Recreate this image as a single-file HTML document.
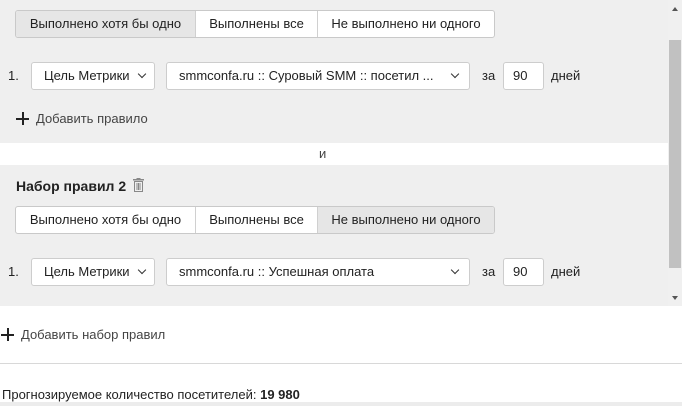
<!DOCTYPE html>
<html><head><meta charset="utf-8"><style>
*{box-sizing:border-box;margin:0;padding:0}
body{width:682px;height:406px;position:relative;overflow:hidden;background:#fff;font-family:"Liberation Sans",sans-serif;font-size:13px;color:#222}
.g{position:absolute;left:0;width:668px;background:#efefef}
.abs{position:absolute;white-space:nowrap}
.seg{position:absolute;height:28px;border:1px solid #c9c9c9;border-radius:3px;overflow:hidden;background:#fff}
.seg div{position:absolute;top:0;height:26px;line-height:26px;text-align:center;border-right:1px solid #d0d0d0;white-space:nowrap}
.seg div:last-child{border-right:none}
.seg .on{background:#e6e6e6}
.sel{position:absolute;height:28px;background:#fff;border:1px solid #cdcdcd;border-radius:3px;line-height:26px;padding-left:12px;white-space:nowrap;overflow:hidden}
.chev{position:absolute;width:6px;height:6px;border-right:1.3px solid #333;border-bottom:1.3px solid #333;transform:rotate(45deg)}
.plus{position:absolute;width:13px;height:13px}
.plus:before{content:"";position:absolute;left:0;top:5.5px;width:13px;height:2px;background:#222}
.plus:after{content:"";position:absolute;left:5.5px;top:0;width:2px;height:13px;background:#222}
</style></head><body>
<div class="g" style="top:0;height:143px"></div>
<div class="g" style="top:165px;height:141px"></div>
<div class="abs" style="left:668px;top:0;width:14px;height:306px;background:#f0f0f0"></div>
<div class="abs" style="left:669px;top:40px;width:12px;height:228px;background:#c1c1c1"></div>
<div class="abs" style="left:672px;top:7px;border-left:3px solid transparent;border-right:3px solid transparent;border-bottom:4px solid #555"></div>
<div class="abs" style="left:672px;top:296px;border-left:3px solid transparent;border-right:3px solid transparent;border-top:4px solid #555"></div>

<div class="seg" style="left:15px;top:10px;width:480px"><div class="on" style="left:0;width:180px">Выполнено хотя бы одно</div><div style="left:180px;width:122px">Выполнены все</div><div style="left:302px;width:176px">Не выполнено ни одного</div></div>
<div class="abs" style="left:8px;top:68px">1.</div>
<div class="sel" style="left:31px;top:62px;width:124px">Цель Метрики<span class="chev" style="left:107px;top:8px"></span></div>
<div class="sel" style="left:166px;top:62px;width:304px">smmconfa.ru :: Суровый SMM :: посетил ...<span class="chev" style="left:285px;top:8px"></span></div>
<div class="abs" style="left:482px;top:68px">за</div>
<div class="sel" style="left:503px;top:62px;width:41px;padding-left:9px">90</div>
<div class="abs" style="left:551px;top:68px">дней</div>
<div class="plus" style="left:16px;top:112px"></div>
<div class="abs" style="left:36px;top:111px;color:#444">Добавить правило</div>
<div class="abs" style="left:319px;top:146px;color:#444">и</div>
<div class="abs" style="left:16px;top:178px;font-weight:bold;font-size:14px">Набор правил 2</div>
<svg class="abs" style="left:133px;top:178px" width="11" height="14" viewBox="0 0 11 14"><rect x="0" y="1" width="11" height="1.5" fill="#888"/><rect x="3.5" y="0" width="4" height="1.5" fill="#888"/><rect x="1.5" y="3.5" width="8" height="10" fill="none" stroke="#888"/><path d="M4 5v7M5.5 5v7M7 5v7" stroke="#888"/></svg>

<div class="seg" style="left:15px;top:206px;width:480px"><div style="left:0;width:180px">Выполнено хотя бы одно</div><div style="left:180px;width:122px">Выполнены все</div><div class="on" style="left:302px;width:176px">Не выполнено ни одного</div></div>
<div class="abs" style="left:8px;top:264px">1.</div>
<div class="sel" style="left:31px;top:258px;width:124px">Цель Метрики<span class="chev" style="left:107px;top:8px"></span></div>
<div class="sel" style="left:166px;top:258px;width:304px">smmconfa.ru :: Успешная оплата<span class="chev" style="left:285px;top:8px"></span></div>
<div class="abs" style="left:482px;top:264px">за</div>
<div class="sel" style="left:503px;top:258px;width:41px;padding-left:9px">90</div>
<div class="abs" style="left:551px;top:264px">дней</div>

<div class="plus" style="left:1px;top:328px"></div>
<div class="abs" style="left:21px;top:327px;color:#444">Добавить набор правил</div>
<div class="abs" style="left:0;top:363px;width:682px;height:1px;background:#d8d8d8"></div>
<div class="abs" style="left:2px;top:387px">Прогнозируемое количество посетителей: <b>19 980</b></div>
<div class="abs" style="left:0;top:402px;width:682px;height:4px;background:#ececec"></div>
</body></html>
